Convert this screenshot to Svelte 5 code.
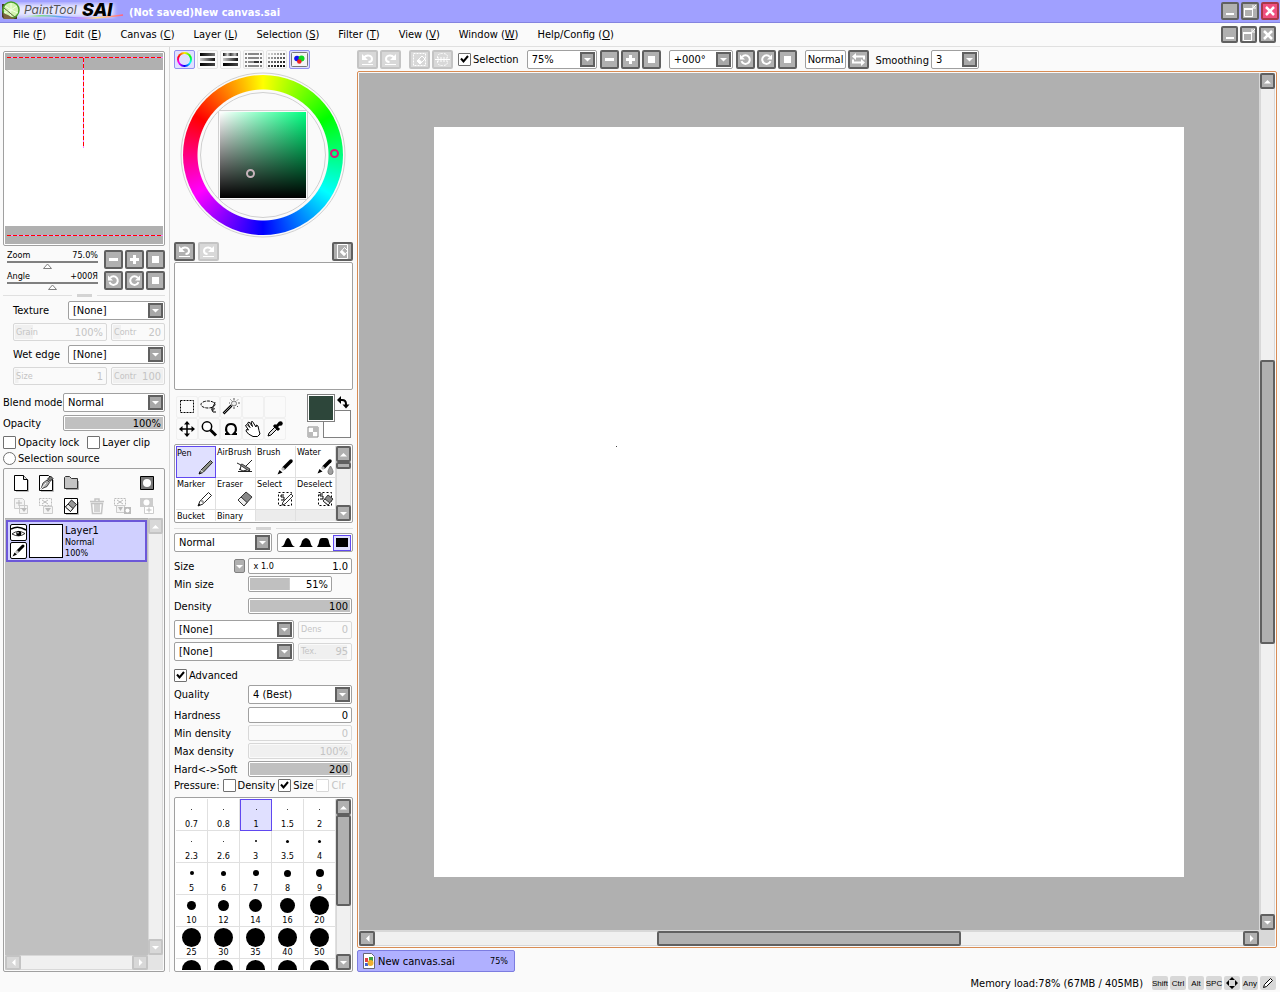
<script>
  const menus = [
    ['File', 'F'], ['Edit', 'E'], ['Canvas', 'C'], ['Layer', 'L'], ['Selection', 'S'],
    ['Filter', 'T'], ['View', 'V'], ['Window', 'W'], ['Help/Config', 'O']
  ];

  const panels = [
    ['Color wheel', 'wheel', true], ['RGB slider', 'rgb', false], ['HSV slider', 'hsv', false],
    ['Color mixer', 'mixer', false], ['Swatches', 'swatches', false], ['Scratch pad', 'pad', true]
  ];

  const tools = [
    ['Rectangle', 'marquee'], ['Lasso', 'lasso'], ['Magic wand', 'wand'], ['', ''], ['', ''],
    ['Move', 'move'], ['Zoom', 'loupe'], ['Rotate', 'omega'], ['Hand', 'hand'], ['Picker', 'dropper']
  ];

  const brushes = [
    ['Pen', 'bPen'], ['AirBrush', 'bAir'], ['Brush', 'bBrush'], ['Water', 'bWater'],
    ['Marker', 'bMarker'], ['Eraser', 'bEraser'], ['Select', 'bSelect'], ['Deselect', 'bDeselect'],
    ['Bucket', ''], ['Binary', ''], ['', ''], ['', '']
  ];

  const sizes = [
    ['0.7', 1], ['0.8', 1], ['1', 1], ['1.5', 1], ['2', 1],
    ['2.3', 1], ['2.6', 1], ['3', 2], ['3.5', 3], ['4', 3],
    ['5', 4], ['6', 5], ['7', 6], ['8', 7], ['9', 8],
    ['10', 9], ['12', 11], ['14', 13], ['16', 15], ['20', 19],
    ['25', 19], ['30', 19], ['35', 19], ['40', 19], ['50', 19],
    ['', 19], ['', 19], ['', 19], ['', 19], ['', 19]
  ];

  const lines = (rows) => rows.map(([y, o]) => `<rect x="2" y="${y}" width="15" height="3" fill="url(#${o})"/>`).join('');
  const grid = (y0, step) => {
    let s = '';
    for (let r = 0; r < 4; r++) for (let c = 0; c < 6; c++) {
      const v = Math.max(20, 215 - r * 45 - c * 18);
      s += `<rect x="${1 + c * 3}" y="${y0 + r * step}" width="2" height="2" fill="rgb(${v},${v},${v})"/>`;
    }
    return s;
  };

  // Every glyph is [viewBox size, markup].
  const icons = {
    minus: [15, '<path d="M3 7.5h9" stroke="#fff" stroke-width="3"/>'],
    plus: [15, '<path d="M3 7.5h9M7.5 3v9" stroke="#fff" stroke-width="3"/>'],
    square: [15, '<path d="M4 4h7v7H4z" fill="#fff"/>'],
    ccw: [15, '<path d="M4.2 4.8a4.3 4.3 0 1 1-.7 4.4" fill="none" stroke="#fff" stroke-width="2"/><path d="M2 2.500v5h5z" fill="#fff"/>'],
    cw: [15, '<path d="M10.800 4.800a4.300 4.300 0 1 0 .7 4.400" fill="none" stroke="#fff" stroke-width="2"/><path d="M13 2.500v5h-5z" fill="#fff"/>'],
    undo: [15, '<path d="M4 5.500h0c3-3.500 8-2 8 1.500 0 2-1.500 3-3.500 3" fill="none" stroke="#fff" stroke-width="2"/><path d="M2 2v6h6zM2 12h11v1H2z" fill="#fff"/>'],
    redo: [15, '<path d="M11 5.500h0c-3-3.500-8-2-8 1.500 0 2 1.500 3 3.500 3" fill="none" stroke="#fff" stroke-width="2"/><path d="M13 2v6h-6zM2 12h11v1H2z" fill="#fff"/>'],
    clearPad: [15, '<path d="M2.500 .5h10v14h-10z" fill="none" stroke="#fff"/><path d="M5.500 8l4-4.500 3.500 3.500-4 4.500z" fill="#b0b0b0" stroke="#fff"/><path d="M5 8l2-2 4 4-2 2z" fill="#fff"/>'],
    desel: [15, '<path d="M1.500 1.500h12v12h-12z" fill="none" stroke="#fff" stroke-dasharray="2 1"/><path d="M5 9l5-5 3 3-5 5z" fill="#d4d4d4" stroke="#fff"/><path d="M5 9l2-2 3 3-2 2z" fill="#fff"/>'],
    invert: [15, '<path d="M2.500 6V5q0-3.500 5-3.500t5 3.500v1zM2.500 9v1q0 3.500 5 3.500t5-3.500V9z" fill="none" stroke="#fff" stroke-dasharray="2 1"/><path d="M0 7.500h15" stroke="#fff"/>'],
    flip: [15, '<path d="M4 4.500h9v3M11 10.500H2v-3" fill="none" stroke="#fff" stroke-width="2"/><path d="M5 1v7L1 4.500zM10 7v7l4-3.500z" fill="#fff"/>'],
    winMin: [14, '<path d="M3 9h8v2H3z" fill="#fff"/>'],
    winMax: [14, '<path d="M1.500 4.500h8v8h-8z" fill="none" stroke="#fff"/><path d="M1 4h9v2H1z" fill="#fff"/><path d="M13 1L10.500 3.500M10 1v3h3" stroke="#fff" fill="none"/>'],
    winClose: [14, '<path d="M3 3l8 8M11 3l-8 8" stroke="#fff" stroke-width="2.500"/>'],
    wheel: [19, ''],
    rgb: [19, lines([[3, 'gA'], [8, 'gB'], [13, 'gC']])],
    hsv: [19, lines([[3, 'gD'], [8, 'gB'], [13, 'gC']])],
    mixer: [19, '<path d="M1 4h17M1 8h17M1 12h17M1 16h17" stroke="#888" stroke-width="2"/><path d="M10 12h8" stroke="#333" stroke-width="2"/><path d="M3.500 2v15M15.500 2v15" stroke="#fafafa"/>'],
    swatches: [19, grid(3, 4)],
    pad: [19, '<rect x="1.500" y="2.500" width="16" height="14" rx="1" fill="#f4f4f4" stroke="#777"/><circle cx="7" cy="8.500" r="2.800" fill="#1010f0"/><circle cx="11.500" cy="8.500" r="3" fill="#10d820"/><circle cx="9.300" cy="11.500" r="2.300" fill="#f02020"/>'],
    marquee: [20, '<path d="M3.500 3.500h13v12h-13z" fill="none" stroke="#000" stroke-dasharray="2 1"/>'],
    lasso: [20, '<ellipse cx="9" cy="7.500" rx="7" ry="3.500" fill="none" stroke="#000" stroke-dasharray="3 1"/><path d="M16 5c-1 4-4 6-3 8 1 1.500 3-1.500 2-2s-3 2-1 4h3" fill="none" stroke="#000"/>'],
    wand: [20, '<path d="M2.500 16.500l8-8" stroke="#000" stroke-width="2.500"/><path d="M3 16l7-7" stroke="#aaa" stroke-width=".8"/><circle cx="13" cy="6.500" r="2.500" fill="#eee" stroke="#777"/><path d="M13 1v2M13 10v2M8 6h1M17 6h2M9.500 2.500l1 1M17 2.500l-1 1M17 10l-1-1" stroke="#555"/>'],
    move: [20, '<path d="M10 3v14M3 10h14" stroke="#000" stroke-width="1.500"/><path d="M10 2l3 3.500H7zM10 18l3-3.500H7zM2 10l3.500-3v6zM18 10l-3.500-3v6z" fill="#000"/>'],
    loupe: [20, '<circle cx="8" cy="7.500" r="4.700" fill="#fff" stroke="#000" stroke-width="1.500"/><path d="M11.500 11l5.500 5.500" stroke="#000" stroke-width="3"/>'],
    omega: [20, '<path d="M4 15h3.500c-4-3.500-3-10 2.500-10s6.500 6.500 2.500 10H16" fill="none" stroke="#000" stroke-width="2"/>'],
    hand: [20, '<path d="M5.500 11L2.500 6.500l1.500-1 3 3L4.500 4 6 3l3.500 4.500L8 3l1.500-.5L13 8l.5-2 1.500 1 1 4.500 1 3.500-2.500 2.500H10L5.500 15 3 12l.5-1.500z" fill="#fff" stroke="#000"/>'],
    dropper: [20, '<path d="M3 17l1-3 6-6 2 2-6 6z" fill="#ddd" stroke="#000"/><path d="M9 6l5 5M11 8l4-4" stroke="#000" stroke-width="3"/><circle cx="15.500" cy="4.500" r="2.200"/>'],
    bPen: [18, '<path d="M2 16l1.500-3.500L13.500 2.500l2 2L6 14.500z" fill="#8c9084" stroke="#222"/><path d="M3.500 12L6 14.500" stroke="#fff"/><path d="M2 16l.5-2 1.500 1.500z"/>'],
    bAir: [18, '<path d="M5 7l9 5M9 9l7-7M1 5l3 1.500M2 13.500h14M5 8l-1 4M13 12l2 2" stroke="#222" fill="none"/><path d="M4 7l2-1 8 5-1 2z" fill="#888" stroke="#222" stroke-width=".8"/><path d="M3 11l4 2 4-1" stroke="#222" fill="none"/>'],
    bBrush: [18, '<path d="M8 10l7-7" stroke="#000" stroke-width="3.500" stroke-linecap="round"/><path d="M6 12l2-2" stroke="#bbb" stroke-width="3"/><path d="M1.500 16.500l2-4.500 3 2.500z"/>'],
    bWater: [18, '<path d="M8 9l6-6" stroke="#000" stroke-width="3.500" stroke-linecap="round"/><path d="M6 11l2-2" stroke="#bbb" stroke-width="3"/><path d="M1.500 15.500l2-4.500 3 2.500z"/><path d="M14.500 8c1.500 3 2.500 4 2.500 6a2.500 2.500 0 0 1-5 0c0-2 1-3 2.500-6z" fill="#a0a0a0" stroke="#777"/>'],
    bMarker: [18, '<path d="M2 16l2-5L12.500 2.500l3 3L7 14z" fill="#fff" stroke="#222"/><path d="M5 10l3 3" stroke="#999" stroke-width="2"/><path d="M2 16l1-2.500 1.500 1.500z"/>'],
    bEraser: [18, '<path d="M2 10l8-8 6 5-8 9z" fill="#888" stroke="#333"/><path d="M2 10l3-3 6 5.500L8 16z" fill="#eee" stroke="#333"/>'],
    bSelect: [18, '<path d="M2.500 2.500h13v13h-13z" fill="none" stroke="#000" stroke-dasharray="2 2"/><path d="M8 5H5v2h3v3H5" fill="none" stroke="#000"/><path d="M6 15l1-3 8-8 2 2-8 8z" fill="#fff" stroke="#333"/>'],
    bDeselect: [18, '<path d="M2.500 2.500h13v13h-13z" fill="none" stroke="#000" stroke-dasharray="2 2"/><path d="M7 4H4v2h3v3H4" fill="none" stroke="#000"/><path d="M7 11l5-6 5 4-5 6z" fill="#888" stroke="#333"/><path d="M7 11l2-2 5 4-2 2z" fill="#eee" stroke="#333"/>'],
    newLayer: [20, '<path d="M5 18.500h12.500V7" stroke="#bbb" fill="none"/><path d="M3.500 2.500h9l4 4v11h-13z" fill="#fff" stroke="#000"/><path d="M12.500 2.500v4h4" fill="#ddd" stroke="#000"/>'],
    penLayer: [20, '<path d="M5 18.500h12.500V7" stroke="#bbb" fill="none"/><path d="M3.500 2.500h9l4 4v11h-13z" fill="#fff" stroke="#000"/><path d="M5 16l2-6 4-3 2.500 2.500-2.500 4z" fill="#aaa" stroke="#222" stroke-width=".8"/><path d="M5 16l5-6" stroke="#fff"/><path d="M11.500 6l3-3 2.500 2.500-3 3z" fill="#777" stroke="#000" stroke-width=".8"/>'],
    folder: [20, '<path d="M5 16.500h12.500V8" stroke="#aaa" fill="none"/><path d="M3.500 15.500v-11l1-1h4l2 2h6v10z" fill="#c4c4c4" stroke="#333"/>'],
    mask: [20, '<path d="M3.500 3.500h13v13h-13z" fill="#777" stroke="#000"/><circle cx="10" cy="10" r="4" fill="#fff"/>'],
    transfer: [20, '<path d="M3.500 2.500h8l2 2v8h-10zM8.500 9.500h8v8h-8z" fill="#f4f4f4" stroke="#ccc"/><path d="M8 4v6M5 7h6" stroke="#bbb"/><path d="M10 12h6l-3 4z" fill="#bbb"/>'],
    mergeDown: [20, '<path d="M3.500 2.500h12v7h-12z" fill="none" stroke="#bbb" stroke-dasharray="2 1"/><path d="M6 4l6 4M6 8l6-4" stroke="#bbb"/><path d="M7.500 10.500h9v7h-9z" fill="#f4f4f4" stroke="#ccc"/><path d="M9 12h6l-3 4z" fill="#bbb"/>'],
    clearLayer: [20, '<path d="M5 18.500h12.500V6" stroke="#bbb" fill="none"/><path d="M3.500 2.500h13v15h-13z" fill="#fff" stroke="#000"/><path d="M4.500 11l6-7 5 4.500-6 7z" fill="#999" stroke="#000" stroke-width=".8"/><path d="M4.500 11l2.500-3 5 4.500-2.500 3z" fill="#eee" stroke="#000" stroke-width=".8"/>'],
    trash: [20, '<path d="M3 5.500h14M8 5V3h4v2M4.500 7.500l1 10h9l1-10zM8 8v8M10 8v8M12 8v8" fill="none" stroke="#c4c4c4" stroke-width="1.500"/>'],
    applyMask: [20, '<path d="M2.500 2.500h11v7h-11z" fill="none" stroke="#bbb" stroke-dasharray="2 1"/><path d="M5 4l6 4M5 8l6-4" stroke="#bbb"/><path d="M4.500 9.500h8v7h-8z" fill="#f4f4f4" stroke="#ccc"/><path d="M6 11h5l-2.500 4z" fill="#bbb"/><path d="M12 11h7v7h-7z" fill="#bbb"/><circle cx="15.500" cy="14.500" r="2" fill="#fff"/>'],
    addMask: [20, '<path d="M3 2h13v9H3z" fill="#ccc"/><circle cx="9.500" cy="6.500" r="3" fill="#fff"/><path d="M7.500 10.500h9v7h-9z" fill="#fff" stroke="#ccc"/><path d="M12 11.500v5M9.500 14h5" stroke="#bbb"/>'],
    eye: [15, '<path d="M0 4q7-4 15 1" stroke="#000" stroke-width="1.500" fill="none"/><path d="M1 9q6-5 13-.5-6 4.500-13 .5z" fill="#fff" stroke="#000" stroke-width=".8"/><circle cx="7.800" cy="8.500" r="2.500"/><circle cx="7" cy="7.700" r=".8" fill="#fff"/>'],
    pen: [15, '<path d="M7 8l5-5" stroke="#000" stroke-width="3" stroke-linecap="round"/><path d="M5 10l2-2" stroke="#bbb" stroke-width="3"/><path d="M1.500 13.500l2-4 2.500 2z"/>'],
    swap: [15, '<path d="M4 5h2q4 0 4 4v2" fill="none" stroke="#000" stroke-width="2"/><path d="M1 5l4-4v8zM6.500 9.500h7L10 13.500z"/>'],
    checker: [15, '<path d="M3 3h10v10H3z" fill="#fff" stroke="#888"/><path d="M8 3h5v5H8zM3 8h5v5H3z" fill="#bbb"/>'],
    up: [11, '<path d="M2 7.500h7L5.500 4z" fill="#fff"/>'],
    down: [11, '<path d="M2 4h7L5.500 7.500z" fill="#fff"/>'],
    left: [11, '<path d="M7.500 2v7L4 5.500z" fill="#fff"/>'],
    right: [11, '<path d="M4 2v7L7.500 5.500z" fill="#fff"/>'],
    arrows: [14, '<path d="M7 1l3 3H4zM7 13l3-3H4zM1 7l3-3v6zM13 7l-3-3v6z" fill="#000"/>'],
    pencil: [14, '<path d="M2.500 11.500l1-3 6-6 2 2-6 6z" fill="#fff" stroke="#000"/>']
  };

  const shapes = [
    'M0 10Q3 9 4 5Q7-3 10 5Q11 9 14 10z',
    'M0 10Q2 9 3 4Q7-2 11 4Q12 9 14 10z',
    'M0 10Q2 7 2.500 3Q3 1 5 1H9Q11 1 11.500 3Q12 7 14 10z',
    'M1 1H13V10H1z'
  ];
</script>

{#snippet glyph(name)}
  {#if icons[name]}
    <svg class="glyph" width={icons[name][0]} height={icons[name][0]} viewBox="0 0 {icons[name][0]} {icons[name][0]}" aria-hidden="true">{@html icons[name][1]}</svg>
  {/if}
{/snippet}

{#snippet key(label, icon, kind = '', off = false)}
  <button class="key {kind}" aria-label={label} disabled={off}>{@render glyph(icon)}</button>
{/snippet}

{#snippet combo(label, value, cls = '')}
  <span class="combo {cls}">
    <select aria-label={label}><option>{value}</option></select>
    <span class="arrow">{@render glyph('down')}</span>
  </span>
{/snippet}

{#snippet bar(label, value, fill, caption = '', off = false, cls = '')}
  <span class="bar {cls}" class:off>
    <input type="range" aria-label={label} value={fill} disabled={off} style="--fill:{fill}%" />
    <span class="over"><small>{caption}</small><output>{value}</output></span>
  </span>
{/snippet}

{#snippet scroll(dir, before, size, after, off = false)}
  <div class="scroll {dir}" class:off>
    {@render key(dir === 'v' ? 'Scroll up' : 'Scroll left', dir === 'v' ? 'up' : 'left', 'end', off)}
    <div class="track">
      <i style="flex:{before}"></i>
      {#if size}<b style="flex:{size}"></b>{/if}
      <i style="flex:{after}"></i>
    </div>
    {@render key(dir === 'v' ? 'Scroll down' : 'Scroll right', dir === 'v' ? 'down' : 'right', 'end', off)}
  </div>
{/snippet}

<svg class="defs" width="0" height="0" aria-hidden="true">
  <defs>
    <linearGradient id="gA"><stop stop-color="#000" /><stop offset="1" stop-color="#777" /></linearGradient>
    <linearGradient id="gB"><stop stop-color="#ccc" /><stop offset="1" stop-color="#111" /></linearGradient>
    <linearGradient id="gC"><stop stop-color="#000" /><stop offset="1" stop-color="#444" /></linearGradient>
    <linearGradient id="gD"><stop stop-color="#111" /><stop offset=".3" stop-color="#ccc" /><stop offset=".5" stop-color="#444" /><stop offset=".8" stop-color="#bbb" /><stop offset="1" stop-color="#222" /></linearGradient>
  </defs>
</svg>

<div class="app">
  <header class="title">
    <div class="logo">
      <svg width="126" height="22" viewBox="0 0 126 22" aria-hidden="true">
        <defs>
          <linearGradient id="sw"><stop stop-color="#fff" stop-opacity="0" /><stop offset=".2" stop-color="#80e080" /><stop offset=".4" stop-color="#60a0ff" /><stop offset=".6" stop-color="#c080ff" /><stop offset=".75" stop-color="#ffe080" /><stop offset="1" stop-color="#ff6080" /></linearGradient>
          <filter id="soft"><feGaussianBlur stdDeviation="2" /></filter>
        </defs>
        <path d="M4 4h110v13H4z" fill="#fff" opacity=".75" filter="url(#soft)" />
        <path d="M2 4h15v15H4L2 17z" fill="#4a3c24" />
        <circle cx="11" cy="10" r="8" fill="#d4f4b0" stroke="#48a028" stroke-width="1.500" />
        <path d="M11 10L5 6M11 10V3M11 10l6-4M11 10l7 3M11 10l-1 7M11 10l-7 3" stroke="#f4ffe4" />
        <path d="M3 13l5 2 7 4H4z" fill="#7a6440" /><path d="M4 8l12 10" stroke="#5c6c3c" />
        <path d="M18 18q18-4 45-1t60-2" fill="none" stroke="url(#sw)" stroke-width="1.500" />
      </svg>
      <em>PaintTool</em><strong>SAI</strong>
    </div>
    <h1>(Not saved)New canvas.sai</h1>
    <div class="win">
      {@render key('Minimize', 'winMin', 'w18')}{@render key('Maximize', 'winMax', 'w18')}{@render key('Close', 'winClose', 'w18 red')}
    </div>
  </header>

  <nav class="menu">
    {#each menus as [name, k]}<button>{name} (<u>{k}</u>)</button>{/each}
    <div class="win inner">
      {@render key('Minimize canvas', 'winMin', 'w17')}{@render key('Restore canvas', 'winMax', 'w17')}{@render key('Close canvas', 'winClose', 'w17')}
    </div>
  </nav>

  <main>
    <aside class="left">
      <div class="navigator">
        <div class="shade"><hr /></div>
        <div class="view"></div>
        <div class="shade"><hr /></div>
        <span class="drop"></span>
      </div>

      <div class="row zoomrow">
        <label class="slide"><span>Zoom<output>75.0%</output></span><input type="range" value="44" /></label>
        {@render key('Zoom out', 'minus')}{@render key('Zoom in', 'plus')}{@render key('Reset zoom', 'square')}
      </div>
      <div class="row zoomrow second">
        <label class="slide"><span>Angle<output>+000Я</output></span><input type="range" value="50" /></label>
        {@render key('Rotate left', 'ccw')}{@render key('Rotate right', 'cw')}{@render key('Reset angle', 'square')}
      </div>

      <div class="split"><span></span></div>

      <div class="row indent t4"><span class="cap">Texture</span>{@render combo('Texture', '[None]', 'grow')}</div>
      <div class="row indent pair t3">{@render bar('Grain', '100%', 22, 'Grain', true, 'grow short')}{@render bar('Texture contrast', '20', 20, 'Contr', true, 'w54 short')}</div>
      <div class="row indent t4"><span class="cap">Wet edge</span>{@render combo('Wet edge', '[None]', 'grow')}</div>
      <div class="row indent pair t3">{@render bar('Edge size', '1', 6, 'Size', true, 'grow short')}{@render bar('Edge contrast', '100', 100, 'Contr', true, 'w54 short')}</div>
      <div class="row wide t8"><span class="cap">Blend mode</span>{@render combo('Blend mode', 'Normal', 'grow')}</div>
      <div class="row wide t3"><span class="cap">Opacity</span>{@render bar('Opacity', '100%', 100, '', false, 'grow')}</div>
      <div class="row checks t5">
        <label><input type="checkbox" />Opacity lock</label>
        <label><input type="checkbox" />Layer clip</label>
      </div>
      <div class="row checks t3"><label><input type="radio" />Selection source</label></div>

      <section class="layers">
        <div class="layertools">
          {@render key('New layer', 'newLayer', 'plain')}{@render key('New linework layer', 'penLayer', 'plain')}{@render key('New folder', 'folder', 'plain')}
          <i></i><i></i>{@render key('Layer mask', 'mask', 'plain')}
          {@render key('Transfer down', 'transfer', 'plain', true)}{@render key('Merge down', 'mergeDown', 'plain', true)}{@render key('Clear layer', 'clearLayer', 'plain')}
          {@render key('Delete layer', 'trash', 'plain', true)}{@render key('Apply mask', 'applyMask', 'plain', true)}{@render key('Add mask', 'addMask', 'plain', true)}
        </div>
        <div class="list">
          <div class="stack">
            <article class="layer">
              <div class="flags">{@render key('Visible', 'eye', 'flag')}{@render key('Paint', 'pen', 'flag')}</div>
              <div class="thumb"></div>
              <p><b>Layer1</b><br />Normal<br />100%</p>
            </article>
          </div>
          {@render scroll('v', 1, 0, 0, true)}
          {@render scroll('h', 1, 0, 0, true)}
        </div>
      </section>
    </aside>

    <aside class="mid">
      <div class="row panels">
        {#each panels as [label, icon, on]}
          <button class="panel" class:on aria-label={label}>
            {#if icon === 'wheel'}<span class="ring"></span>{:else}{@render glyph(icon)}{/if}
          </button>
        {/each}
      </div>

      <div class="picker">
        <div class="hue"></div>
        <div class="sv"></div>
        <svg width="168" height="168" viewBox="0 0 168 168" aria-hidden="true">
          <g fill="none" stroke="#d0d0d0">
            <circle cx="84" cy="84" r="82" />
            <circle cx="84" cy="84" r="62.500" />
            <path d="M40 39.500h88M40 128.500h88M39.500 40v88M128.500 40v88" />
          </g>
          <g fill="none" stroke-width="2">
            <circle cx="155.500" cy="82.500" r="3.500" stroke="#e0187c" />
            <circle cx="71.500" cy="102.500" r="3.500" stroke="#c8b4bc" />
          </g>
        </svg>
      </div>

      <div class="row hist">
        {@render key('Undo scratch', 'undo', 'w21')}{@render key('Redo scratch', 'redo', 'w21', true)}
        <i></i>{@render key('Clear scratch pad', 'clearPad', 'w21')}
      </div>
      <div class="scratch"></div>

      <div class="row toolrow">
        <div class="tools">
          {#each tools as [label, icon]}
            <button aria-label={label || 'Empty slot'} disabled={!icon}>{@render glyph(icon)}</button>
          {/each}
        </div>
        <div class="swatch">
          <button class="fg" aria-label="Foreground color"></button>
          <button class="ic" aria-label="Swap colors">{@render glyph('swap')}</button>
          <button class="ic soft" aria-label="Transparent color">{@render glyph('checker')}</button>
          <button class="bg" aria-label="Background color"></button>
        </div>
      </div>

      <div class="box brushbox">
        <div class="brushes">
          {#each brushes as [name, icon], i}
            <button class:on={i === 0} class:none={!name} aria-label={name || 'Empty slot'}>
              <span>{name}</span>{@render glyph(icon)}
            </button>
          {/each}
        </div>
        {@render scroll('v', 0, 3, 38)}
      </div>

      <div class="split"><span></span></div>

      <div class="row t3 shaperow">
        {@render combo('Brush blend', 'Normal', 'w98')}
        <div class="shapes">
          {#each shapes as d, i}
            <button class:on={i === 3} aria-label="Edge shape {i + 1}"><svg width="14" height="11" viewBox="0 0 14 11"><path {d} /></svg></button>
          {/each}
        </div>
      </div>

      <div class="row field t6"><span class="cap">Size</span>{@render key('Size unit', 'down', 'unit')}{@render bar('Size', '1.0', 1, ' x 1.0', false, 'grow')}</div>
      <div class="row field t2"><span class="cap">Min size</span>{@render bar('Min size', '51%', 51, '', false, 'w84')}</div>
      <div class="row field t6"><span class="cap">Density</span>{@render bar('Density', '100', 100, '', false, 'grow')}</div>
      <div class="row pair t6">{@render combo('Brush form', '[None]', 'grow')}{@render bar('Form density', '0', 0, 'Dens', true, 'w54 short')}</div>
      <div class="row pair t3">{@render combo('Brush texture', '[None]', 'grow')}{@render bar('Texture density', '95', 95, 'Tex.', true, 'w54 short')}</div>
      <div class="row checks t8"><label><input type="checkbox" checked />Advanced</label></div>
      <div class="row field t3"><span class="cap">Quality</span>{@render combo('Quality', '4 (Best)', 'grow')}</div>
      <div class="row field t3"><span class="cap">Hardness</span>{@render bar('Hardness', '0', 0, '', false, 'grow')}</div>
      <div class="row field t2"><span class="cap">Min density</span>{@render bar('Min density', '0', 0, '', true, 'grow')}</div>
      <div class="row field t2"><span class="cap">Max density</span>{@render bar('Max density', '100%', 100, '', true, 'grow')}</div>
      <div class="row field t2"><span class="cap">Hard&lt;-&gt;Soft</span>{@render bar('Hard to soft', '200', 100, '', false, 'grow')}</div>
      <div class="row checks pressure t2">
        <span>Pressure:</span>
        <label><input type="checkbox" />Density</label>
        <label><input type="checkbox" checked />Size</label>
        <label class="off"><input type="checkbox" disabled />Clr</label>
      </div>

      <div class="box sizebox">
        <div class="sizes">
          {#each sizes as [label, d], i}
            <button class:on={i === 2}><span><i style="width:{d}px;height:{d}px"></i></span>{label}</button>
          {/each}
        </div>
        {@render scroll('v', 0, 88, 49)}
      </div>
    </aside>

    <section class="work">
      <div class="row toolbar">
        {@render key('Undo', 'undo', 'w21', true)}{@render key('Redo', 'redo', 'w21', true)}
        <i></i>
        {@render key('Deselect', 'desel', 'w21', true)}{@render key('Invert selection', 'invert', 'w21', true)}
        <span class="checks"><label><input type="checkbox" checked />Selection</label></span>
        {@render combo('Zoom level', '75%', 'w70')}
        {@render key('Zoom out', 'minus')}{@render key('Zoom in', 'plus')}{@render key('Fit', 'square')}
        <i></i>
        {@render combo('Rotation', '+000°', 'w64')}
        {@render key('Rotate left', 'ccw')}{@render key('Rotate right', 'cw')}{@render key('Reset', 'square')}
        <i></i>
        <button class="mode">Normal</button>
        {@render key('Flip', 'flip', 'w21')}
        <span class="smooth">Smoothing</span>
        {@render combo('Smoothing', '3', 'w48')}
      </div>
      <div class="frame">
        <div class="desk"><div class="canvas"><i></i></div></div>
        {@render scroll('v', 271, 281, 270)}
        {@render scroll('h', 282, 301, 282)}
      </div>
      <button class="tab">
        <svg width="14" height="16" viewBox="0 0 14 16" aria-hidden="true">
          <path d="M1.500.5h8l3 3v12h-11z" fill="#fff" stroke="#667" />
          <path d="M3 5h3v4H3z" fill="#e04040" /><path d="M7 4h4v4H7z" fill="#40a040" /><path d="M3 10h3v3H3z" fill="#4060d0" /><circle cx="8.500" cy="10" r="3" fill="#f0b030" />
        </svg>
        <span>New canvas.sai</span><small>75%</small>
      </button>
    </section>
  </main>

  <footer>
    <span>Memory load:78% (67MB / 405MB)</span>
    <div class="badges">
      <kbd>Shift</kbd><kbd>Ctrl</kbd><kbd>Alt</kbd><kbd>SPC</kbd><kbd>{@render glyph('arrows')}</kbd><kbd>Any</kbd><kbd>{@render glyph('pencil')}</kbd>
    </div>
  </footer>
</div>

<style>
  :global(body) { margin: 0; background: #fafafa; }
  .app, button, select, kbd { font: 11px/13px "DejaVu Sans Condensed", "DejaVu Sans", sans-serif; color: #000; }
  .app { display: flex; flex-direction: column; height: 100vh; background: #fafafa; overflow: hidden; }
  .app :global(*) { box-sizing: border-box; }
  button { margin: 0; padding: 0; border: 0; background: none; }
  .glyph, svg { display: block; flex: none; }
  .defs { position: absolute; }

  .title { display: flex; align-items: center; height: 23px; background: #a0a0ff; border-bottom: 1px solid #8484e0; }
  .logo { position: relative; width: 129px; height: 22px; }
  .logo svg { position: absolute; left: 0; top: 0; }
  .logo em { position: absolute; left: 24px; top: 3px; font: italic 12px/14px "Inter", sans-serif; color: #555; }
  .logo strong { position: absolute; left: 82px; top: 0; font: italic 800 18px/20px "Inter", sans-serif; }
  h1 { flex: 1; margin: 0; padding-top: 2px; font-size: 11px; font-weight: bold; color: #fff; }
  .win { display: flex; gap: 2px; padding-right: 1px; }
  .win.inner { margin-left: auto; padding-right: 4px; }
  .menu { display: flex; align-items: center; gap: 19px; height: 24px; padding-left: 13px; border-bottom: 1px solid #e0e0e0; white-space: nowrap; }

  .key { display: flex; align-items: center; justify-content: center; flex: none; width: 19px; height: 19px; border: 2px solid #606060; border-radius: 2px; background: #b0b0b0; overflow: hidden; }
  .key:disabled { border-color: #c4c4c4; background: #d8d8d8; }
  .w21 { width: 21px; }
  .w18 { width: 18px; height: 18px; }
  .w17 { width: 17px; height: 17px; }
  .red { border-color: #a83848; background: #f05080; }
  .key.end { width: 15px; height: 16px; }
  .key.plain, .key.plain:disabled { width: 20px; height: 20px; border: 0; background: none; }
  .key.flag { width: 17px; height: 17px; border: 1px solid #000; background: #fff; }
  .key.unit { width: 11px; height: 14px; margin-right: 3px; border: 1px solid #808080; align-items: flex-end; }

  main { display: flex; flex: 1; min-height: 0; }
  .row { display: flex; align-items: center; }
  .t2 { margin-top: 2px; }
  .t3 { margin-top: 3px; }
  .t4 { margin-top: 4px; }
  .t5 { margin-top: 5px; }
  .t6 { margin-top: 6px; }
  .t8 { margin-top: 8px; }
  .cap { flex: none; white-space: nowrap; }
  .grow { flex: 1; min-width: 0; }
  .w54 { width: 54px; }
  .w48 { width: 48px; }
  .w64 { width: 64px; }
  .w70 { width: 70px; }
  .w84 { width: 84px; }
  .w98 { width: 98px; }

  .left { display: flex; flex-direction: column; flex: none; width: 170px; padding: 4px 4px 0 3px; border-right: 1px solid #d8d8d8; }
  .navigator { position: relative; display: flex; flex-direction: column; flex: none; height: 195px; padding: 1px; border: 1px solid #a0a0a0; border-radius: 2px; background: #fff; }
  .view { flex: 1; background: #fff; }
  .shade { height: 17px; padding-top: 4px; background: #b0b0b0; }
  .shade:nth-child(3) { height: 18px; padding-top: 9px; }
  .shade hr { height: 1px; margin: 0; margin-left: 2px; border: 0; background: repeating-linear-gradient(90deg, #f00 0 4px, #ff80ff 4px 6px); }
  .drop { position: absolute; left: 79px; top: 6px; width: 1px; height: 90px; background: repeating-linear-gradient(#f00 0 4px, #ff80ff 4px 6px); }

  .zoomrow { gap: 2px; margin-top: 4px; }
  .zoomrow.second { margin-top: 2px; }
  .slide { flex: 1; display: flex; flex-direction: column; margin: 0 4px; height: 19px; font-size: 9px; line-height: 11px; }
  .slide span { display: flex; justify-content: space-between; }
  .slide input { appearance: none; width: 100%; height: 8px; margin: 0; background: linear-gradient(#808080 0 2px, transparent 2px); }
  .slide input::-webkit-slider-thumb { appearance: none; width: 9px; height: 6px; margin-top: 1px; background: url("data:image/svg+xml,%3Csvg xmlns='http://www.w3.org/2000/svg' width='9' height='6'%3E%3Cpath d='M.5 5.500h8L4.500 1z' fill='%23fff' stroke='%23808080'/%3E%3C/svg%3E"); }

  .split { display: flex; align-items: center; justify-content: center; flex: none; height: 3px; margin-top: 4px; background: linear-gradient(transparent 1px, #e0e0e0 1px 2px, transparent 2px); }
  .split span { width: 15px; height: 3px; box-sizing: content-box; border: solid #fafafa; border-width: 0 5px; background: #d4d4d4; }

  .indent { padding-left: 10px; }
  .indent .cap { width: 55px; }
  .wide .cap { width: 60px; }
  .pair { gap: 4px; }

  .combo { position: relative; display: block; height: 19px; }
  .combo.grow { flex: 1; }
  .combo select { appearance: none; display: block; width: 100%; height: 19px; margin: 0; padding: 0 18px 0 4px; border: 1px solid #a0a0a0; border-radius: 2px; background: #fff; }
  .arrow { position: absolute; right: 2px; top: 2px; width: 15px; height: 15px; border: 2px solid #606060; background: #a8a8a8; pointer-events: none; }

  .bar { position: relative; display: block; height: 16px; }
  .bar.short { height: 18px; }
  .bar input { appearance: none; display: block; width: 100%; height: 100%; margin: 0; padding: 0; border: 1px solid #a0a0a0; border-radius: 2px; background: linear-gradient(#c0c0c0, #c0c0c0) 1px 1px / calc(var(--fill) - 2px) calc(100% - 2px) no-repeat #fff; }
  .bar input::-webkit-slider-thumb { appearance: none; width: 1px; height: 1px; }
  .bar.off input { border-color: #d8d8d8; background-color: #fafafa; background-image: linear-gradient(#f0f0f0, #f0f0f0); }
  .over { position: absolute; inset: 0 4px 0 3px; display: flex; align-items: center; justify-content: space-between; pointer-events: none; white-space: pre; }
  .over small { font-size: 9px; }
  .off .over, label.off { color: #c4c4c4; }

  .checks { height: 13px; }
  .checks label { display: flex; align-items: center; gap: 2px; white-space: nowrap; }
  .checks input { appearance: none; width: 13px; height: 13px; margin: 0; border: 1px solid #707070; border-radius: 1px; background: #fff; }
  .checks input[type='radio'] { border-radius: 50%; }
  .checks input:disabled { border-color: #d8d8d8; }
  .checks input:checked { background: url("data:image/svg+xml,%3Csvg xmlns='http://www.w3.org/2000/svg' width='11' height='11'%3E%3Cpath d='M2 4.500l2.500 3L9 2' fill='none' stroke='%23000' stroke-width='2'/%3E%3C/svg%3E") #fff; }
  .left .checks { gap: 8px; }
  .mid .pressure { gap: 3px; }

  .layers { flex: 1; min-height: 0; display: flex; flex-direction: column; margin-top: 3px; padding: 1px; border: 1px solid #a0a0a0; border-radius: 2px; }
  .layertools { display: grid; grid-template-columns: repeat(6, 20px); justify-content: space-between; row-gap: 3px; padding: 3px 6px 2px; }
  .list { flex: 1; min-height: 0; display: grid; grid-template: 1fr 15px / 1fr 15px; background: #e4e4e4; }
  .stack { padding: 1px; background: #c0c0c0; border-top: 1px solid #b0b0b0; }
  .layer { display: flex; gap: 2px; height: 42px; padding: 2px; border: 2px solid #6c58d8; background: #d0d0ff; }
  .flags { display: flex; flex-direction: column; gap: 1px; }
  .thumb { width: 34px; height: 34px; border: 1px solid #000; background: #fff; }
  .layer p { margin: 1px 0 0; font-size: 9px; line-height: 11px; }
  .layer b { font-size: 11px; font-weight: normal; }

  .scroll { display: flex; min-width: 0; min-height: 0; background: #d8d8d8; }
  .scroll.v { flex-direction: column; }
  .track { flex: 1; display: flex; min-width: 0; min-height: 0; background: #f0f0f0; }
  .scroll.v .track { flex-direction: column; margin: 0 1px; }
  .scroll.h .track { margin: 1px 0; }
  .track i { min-width: 0; min-height: 0; }
  .track b { margin: 0 -1px; border: 2px solid #606060; border-radius: 2px; background: #b0b0b0; }
  .scroll.h .track b { margin: -1px 0; }
  .scroll.h .key { width: 16px; height: 15px; }
  .scroll.off .track { background: #f0f0f0; }

  .mid { display: flex; flex-direction: column; flex: none; width: 187px; padding: 3px 4px 0; }
  .panels { gap: 2px; }
  .panel { display: flex; align-items: center; justify-content: center; width: 21px; height: 19px; border: 1px solid #e4e4e4; border-radius: 2px; overflow: hidden; }
  .panel.on { border-color: #9090f0; background: #e0e0ff; }
  .ring { width: 15px; height: 15px; border-radius: 50%; background: radial-gradient(#e0e0ff 0 5px, transparent 6px), conic-gradient(#fe0, #0f0 60deg, #0ff 120deg, #00f 180deg, #f0f 240deg, #f00 300deg, #fe0); }
  .picker { position: relative; width: 168px; height: 168px; margin: 2px 0 0 5px; }
  .picker > * { position: absolute; }
  .hue { inset: 4px; border-radius: 50%; background: radial-gradient(#fafafa 0 65px, transparent 66px), conic-gradient(#ff0, #0f0 60deg, #0ff 120deg, #00f 180deg, #f0f 240deg, #f00 300deg, #ff0); }
  .sv { inset: 41px; background: linear-gradient(transparent, #000), linear-gradient(90deg, #fff, #00ff80); }
  .hist { gap: 3px; margin-top: 3px; }
  .hist i { flex: 1; }
  .scratch { flex: none; height: 128px; margin-top: 1px; border: 1px solid #a0a0a0; border-radius: 2px; background: #fff; }

  .toolrow { justify-content: space-between; align-items: flex-start; margin-top: 4px; padding: 0 2px; }
  .tools { display: grid; grid-template-columns: repeat(5, 22px); padding-top: 2px; }
  .tools button { display: flex; align-items: center; justify-content: center; width: 22px; height: 22px; border: 1px solid #f0f0f0; border-radius: 2px; }
  .swatch { position: relative; width: 47px; height: 46px; }
  .swatch button { position: absolute; }
  .swatch .fg { left: 3px; top: 0; z-index: 1; width: 28px; height: 28px; border: 1px solid #808080; box-shadow: inset 0 0 0 1px #fff; background: #2d463a; }
  .swatch .bg { right: 0; bottom: 2px; width: 28px; height: 28px; border: 1px solid #808080; background: #fff; }
  .swatch .ic { right: 0; top: 1px; }
  .swatch .soft { left: 1px; right: auto; top: 30px; }

  .box { display: flex; padding: 1px; border: 1px solid #a0a0a0; border-radius: 2px; background: #fff; overflow: hidden; }
  .box .scroll { width: 15px; }
  .brushbox { flex: none; height: 79px; margin-top: 4px; }
  .brushes { flex: 1; display: grid; grid-template-columns: repeat(4, 40px); grid-auto-rows: 32px; overflow: hidden; }
  .brushes button { display: flex; flex-direction: column; align-items: flex-start; padding: 0 0 0 1px; border: solid #e0e0e0; border-width: 0 1px 1px 0; font-size: 9px; line-height: 13px; white-space: nowrap; }
  .brushes .glyph { align-self: flex-end; margin: -1px 1px 0 0; }
  .brushes .on { padding-left: 0; border: 1px solid #6048f0; background: #e0e0ff; }
  .brushes .on .glyph { margin: -2px 0 0; }
  .brushes .none { background: #ececec; }

  .shaperow { justify-content: space-between; }
  .shapes { display: flex; align-items: center; width: 76px; height: 19px; padding: 0 1px; border: 1px solid #a0a0a0; border-radius: 2px; background: #fff; }
  .shapes button { flex: 1; display: flex; align-items: center; justify-content: center; height: 16px; border: 1px solid transparent; }
  .shapes .on { border-color: #6048f0; background: #e0e0ff; }
  .field { padding-right: 1px; }
  .mid .pair { padding-right: 1px; }
  .field .cap { width: 74px; }
  .field:has(.unit) .cap { width: 60px; }

  .sizebox { flex: 1; min-height: 0; margin-top: 5px; }
  .sizes { flex: 1; display: grid; grid-template-columns: repeat(5, 32px); grid-auto-rows: 32px; overflow: hidden; }
  .sizes button { display: flex; flex-direction: column; align-items: center; border: solid #e0e0e0; border-width: 0 1px 1px 0; font-size: 9px; line-height: 11px; }
  .sizes span { display: flex; align-items: center; height: 20px; flex: none; }
  .sizes i { display: block; border-radius: 50%; background: #000; }
  .sizes .on { border: 1px solid #6048f0; background: #e0e0ff; }
  .sizes .on span { height: 19px; }

  .work { flex: 1; min-width: 0; display: flex; flex-direction: column; padding: 3px 3px 0 0; }
  .toolbar { gap: 2px; height: 21px; align-items: flex-start; white-space: nowrap; }
  .toolbar > i { width: 4px; }
  .toolbar .checks { margin: 3px 6px 0 3px; }
  .toolbar .combo { margin-right: 1px; }
  .mode { height: 19px; padding: 0 2px; border: 1px solid #a0a0a0; border-radius: 2px; background: #fff; }
  .smooth { padding: 4px 0 0 4px; }
  .frame { flex: 1; min-height: 0; display: grid; grid-template: minmax(0, 1fr) 16px / minmax(0, 1fr) 16px; padding: 1px; border: 1px solid #d88c54; border-radius: 2px; background: linear-gradient(#d8d8d8, #d8d8d8) content-box; }
  .frame > .scroll.v { padding-left: 1px; }
  .frame > .scroll.h { padding-top: 1px; }
  .desk { display: flex; align-items: center; justify-content: center; background: #b0b0b0; overflow: hidden; }
  .canvas { display: flow-root; flex: none; width: 750px; height: 750px; background: #fff; }
  .canvas i { display: block; width: 1px; height: 1px; margin: 319px 0 0 182px; background: #444; }
  .tab { display: flex; align-items: center; gap: 2px; flex: none; width: 158px; height: 22px; margin-top: 2px; padding: 0 6px 0 4px; border: 1px solid #7c7ce0; border-radius: 2px; background: #b0b0ff; }
  .tab span { flex: 1; text-align: left; }
  .tab small { font-size: 9px; }

  footer { display: flex; align-items: center; justify-content: flex-end; flex: none; gap: 9px; height: 20px; padding: 2px 4px 0 0; }
  .badges { display: flex; gap: 2px; }
  kbd { display: flex; align-items: center; justify-content: center; width: 16px; height: 14px; border-radius: 2px; background: #d8d8d8; font: 8px/11px "Liberation Sans", sans-serif; }
</style>
